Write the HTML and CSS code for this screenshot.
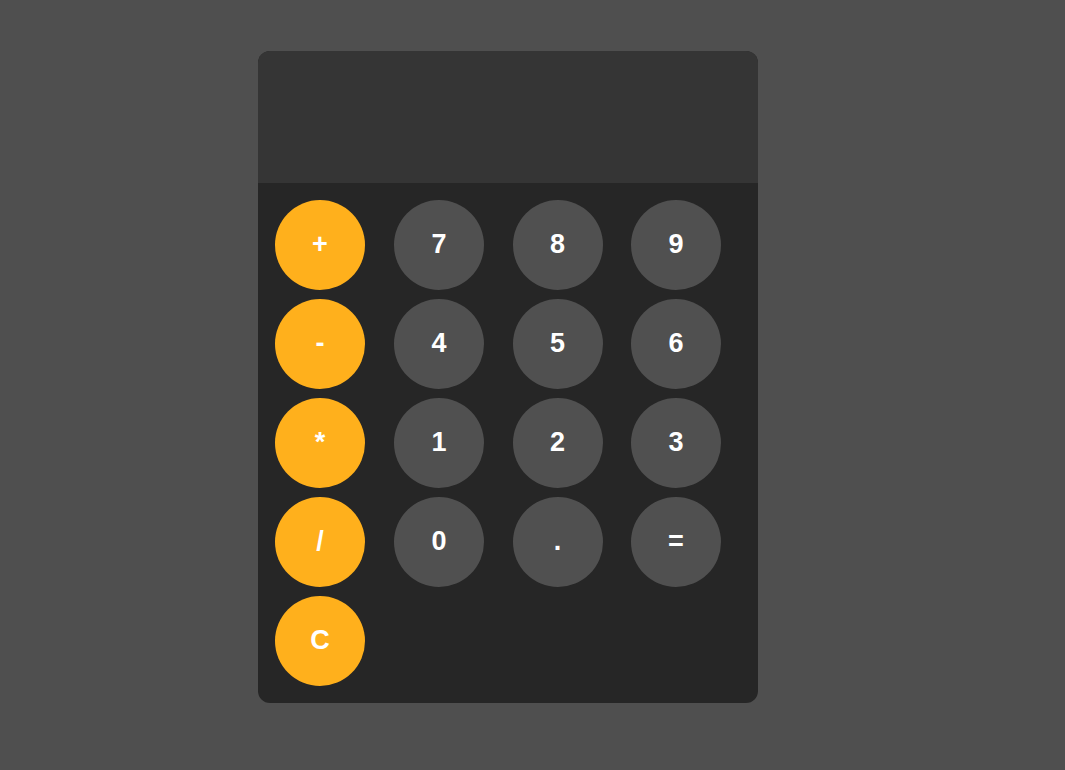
FILE: index.html
```html
<!DOCTYPE html>
<html lang="en">
<head>
<meta charset="utf-8">
<title>Calculator</title>
<link rel="stylesheet" href="styles.css">
</head>
<body>
<div class="calculator">
  <div class="display"></div>
  <div class="keypad">
    <div class="operators">
      <button class="btn op">+</button>
      <button class="btn op">-</button>
      <button class="btn op">*</button>
      <button class="btn op">/</button>
      <button class="btn op">C</button>
    </div>
    <div class="digits">
      <button class="btn num">7</button>
      <button class="btn num">8</button>
      <button class="btn num">9</button>
      <button class="btn num">4</button>
      <button class="btn num">5</button>
      <button class="btn num">6</button>
      <button class="btn num">1</button>
      <button class="btn num">2</button>
      <button class="btn num">3</button>
      <button class="btn num">0</button>
      <button class="btn num">.</button>
      <button class="btn num">=</button>
    </div>
  </div>
</div>
</body>
</html>
```
FILE: styles.css
```css
html, body {
  margin: 0;
  padding: 0;
}
body {
  background: #4f4f4f;
  font-family: "Liberation Sans", Arial, sans-serif;
  padding-top: 51px;
  padding-left: 258px;
  min-height: 770px;
  box-sizing: border-box;
}
.calculator {
  width: 500px;
  border-radius: 12px;
  overflow: hidden;
  background: #262626;
}
.display {
  height: 132px;
  background: #353535;
}
.keypad {
  display: flex;
  padding: 17px;
  gap: 29px;
}
.operators {
  display: flex;
  flex-direction: column;
  gap: 9px;
}
.digits {
  display: grid;
  grid-template-columns: repeat(3, 90px);
  grid-auto-rows: 90px;
  column-gap: 28.5px;
  row-gap: 9px;
  align-content: start;
}
.btn {
  width: 90px;
  height: 90px;
  border-radius: 50%;
  border: none;
  padding: 0 0 2px;
  margin: 0;
  color: #ffffff;
  font-family: "Liberation Sans", Arial, sans-serif;
  font-weight: bold;
  font-size: 27px;
  cursor: pointer;
}
.op {
  background: #ffb01c;
}
.num {
  background: #505050;
}
```
